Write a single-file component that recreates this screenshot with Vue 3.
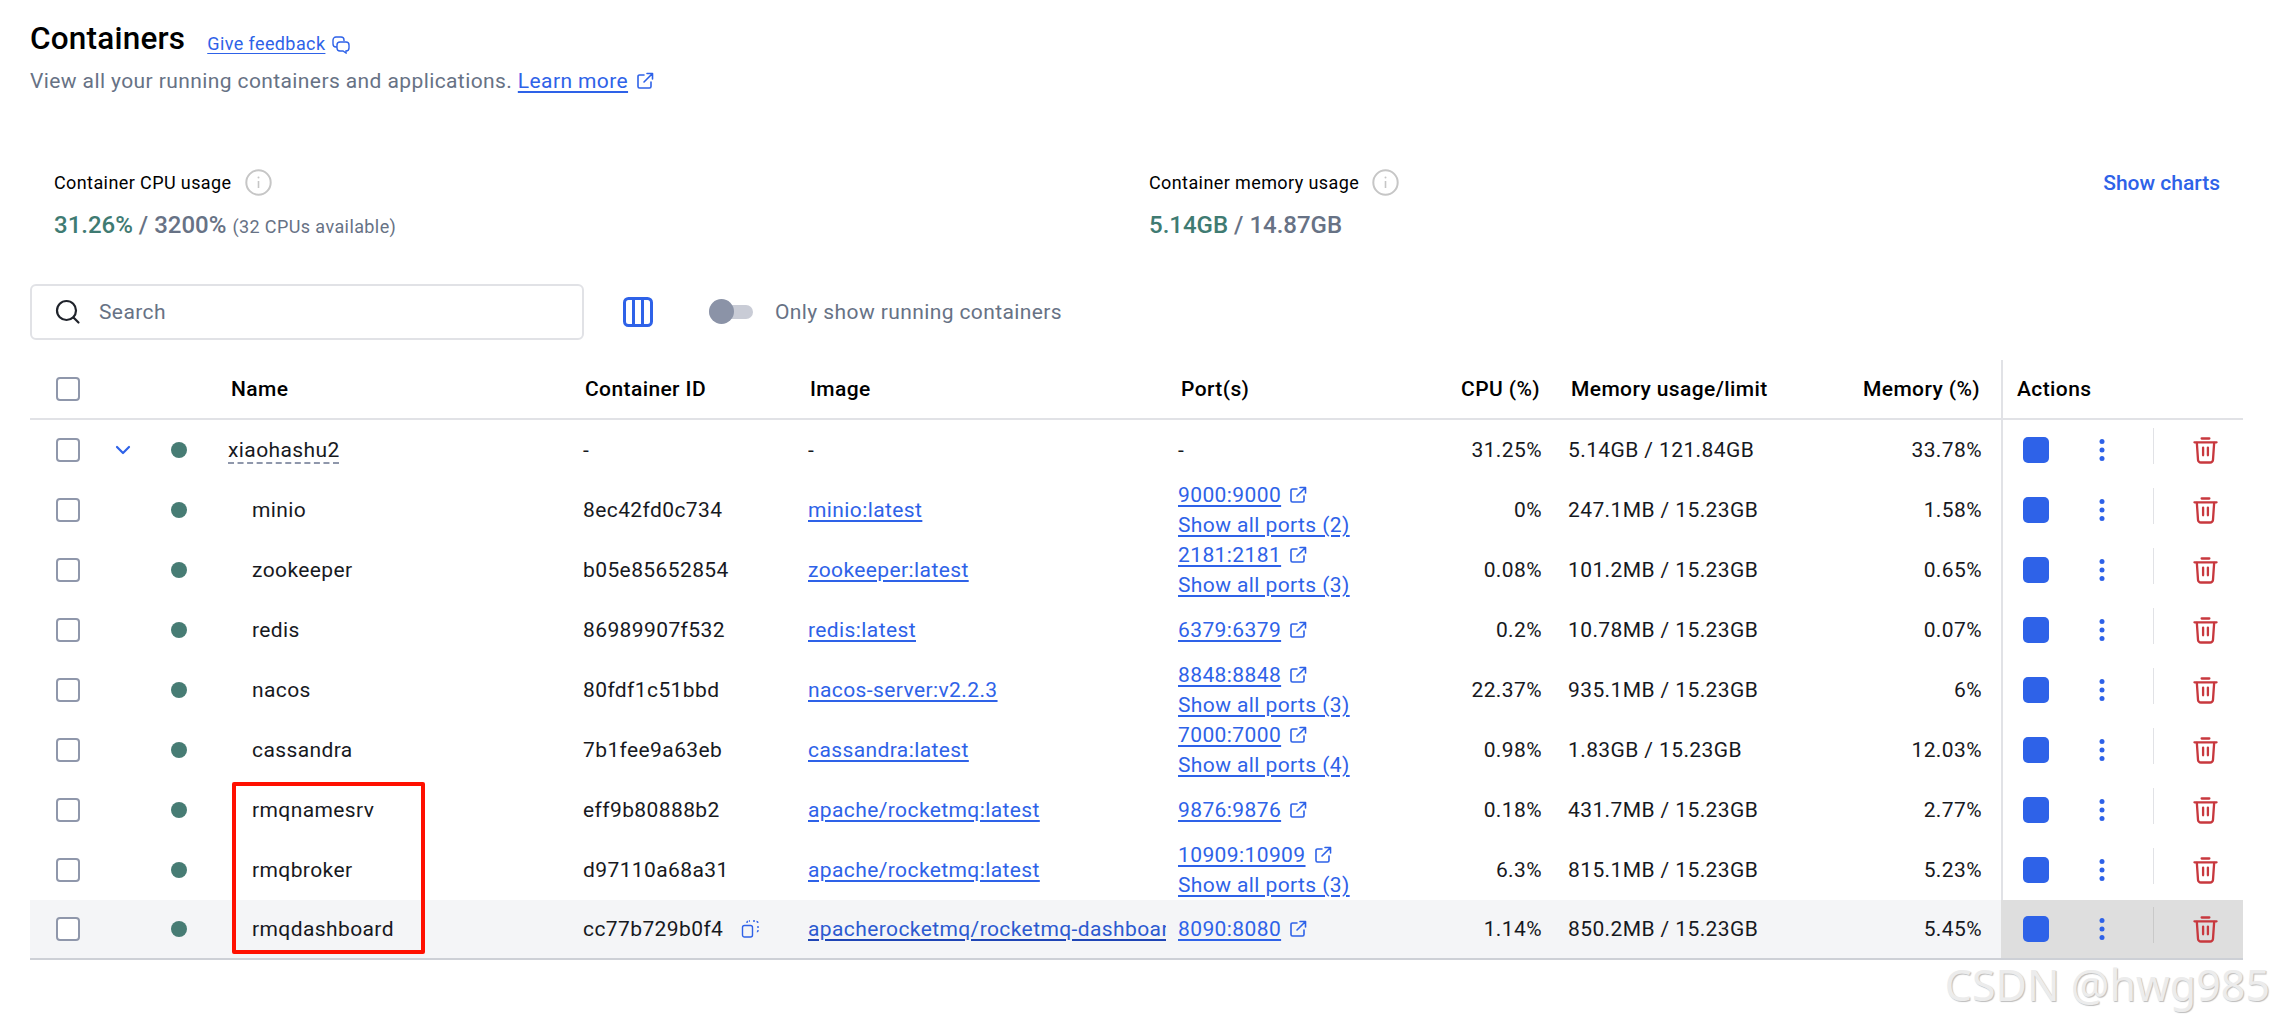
<script setup>
const rows = [
  { name: 'xiaohashu2', group: true, id: '-', image: '-', port: '-', cpu: '31.25%', mem: '5.14GB / 121.84GB', pct: '33.78%' },
  { name: 'minio', id: '8ec42fd0c734', image: 'minio:latest', port: '9000:9000', all: 2, cpu: '0%', mem: '247.1MB / 15.23GB', pct: '1.58%' },
  { name: 'zookeeper', id: 'b05e85652854', image: 'zookeeper:latest', port: '2181:2181', all: 3, cpu: '0.08%', mem: '101.2MB / 15.23GB', pct: '0.65%' },
  { name: 'redis', id: '86989907f532', image: 'redis:latest', port: '6379:6379', cpu: '0.2%', mem: '10.78MB / 15.23GB', pct: '0.07%' },
  { name: 'nacos', id: '80fdf1c51bbd', image: 'nacos-server:v2.2.3', port: '8848:8848', all: 3, cpu: '22.37%', mem: '935.1MB / 15.23GB', pct: '6%' },
  { name: 'cassandra', id: '7b1fee9a63eb', image: 'cassandra:latest', port: '7000:7000', all: 4, cpu: '0.98%', mem: '1.83GB / 15.23GB', pct: '12.03%' },
  { name: 'rmqnamesrv', id: 'eff9b80888b2', image: 'apache/rocketmq:latest', port: '9876:9876', cpu: '0.18%', mem: '431.7MB / 15.23GB', pct: '2.77%' },
  { name: 'rmqbroker', id: 'd97110a68a31', image: 'apache/rocketmq:latest', port: '10909:10909', all: 3, cpu: '6.3%', mem: '815.1MB / 15.23GB', pct: '5.23%' },
  { name: 'rmqdashboard', id: 'cc77b729b0f4', image: 'apacherocketmq/rocketmq-dashboard:latest', port: '8090:8080', cpu: '1.14%', mem: '850.2MB / 15.23GB', pct: '5.45%', hover: true },
]
</script>

<template>
  <div class="page">
    <header class="head">
      <div class="title-line">
        <h1>Containers</h1>
        <a class="feedback">Give feedback</a>
        <svg class="ico-fb" viewBox="0 0 18 18" fill="none" stroke="currentColor" stroke-width="1.4">
          <path d="M5 11H4a3 3 0 0 1-3-3V4a3 3 0 0 1 3-3h5a3 3 0 0 1 3 3v1" />
          <path d="M8 6h6a3 3 0 0 1 3 3v3a3 3 0 0 1-3 3v2l-3-2H8a3 3 0 0 1-3-3V9a3 3 0 0 1 3-3z" />
        </svg>
      </div>
      <p class="sub">View all your running containers and applications. <a>Learn more</a>
        <svg class="ico-ext" viewBox="0 0 18 18" fill="none" stroke="currentColor" stroke-width="1.6" stroke-linecap="round" stroke-linejoin="round">
          <path d="M8 3H3.500A1.500 1.500 0 0 0 2 4.500v10A1.500 1.500 0 0 0 3.500 16h10a1.500 1.500 0 0 0 1.500-1.500V10" />
          <path d="M11 1.500h5.500V7M16.500 1.500L8 10" />
        </svg>
      </p>
    </header>

    <section class="stats">
      <div class="stat cpu">
        <div class="stat-label">Container CPU usage
          <svg class="ico-info" viewBox="0 0 27 27" fill="none"><circle cx="13.500" cy="13.500" r="12.200" stroke="#c6c6c6" stroke-width="2" /><path d="M13.500 12v7" stroke="#c6c6c6" stroke-width="1.600" /><circle cx="13.500" cy="8.600" r="1" fill="#c6c6c6" /></svg>
        </div>
        <div class="stat-value"><span class="good">31.26%</span> / 3200% <small>(32 CPUs available)</small></div>
      </div>
      <div class="stat mem">
        <div class="stat-label">Container memory usage
          <svg class="ico-info" viewBox="0 0 27 27" fill="none"><circle cx="13.500" cy="13.500" r="12.200" stroke="#c6c6c6" stroke-width="2" /><path d="M13.500 12v7" stroke="#c6c6c6" stroke-width="1.600" /><circle cx="13.500" cy="8.600" r="1" fill="#c6c6c6" /></svg>
        </div>
        <div class="stat-value"><span class="good">5.14GB</span> / 14.87GB</div>
      </div>
      <a class="charts">Show charts</a>
    </section>

    <section class="toolbar">
      <label class="search">
        <svg class="ico-search" viewBox="0 0 26 26" fill="none" stroke="#1f232b" stroke-width="2.200" stroke-linecap="round">
          <circle cx="11.500" cy="11.500" r="9.500" />
          <path d="M18.500 18.500l5 5" />
        </svg>
        <span>Search</span>
      </label>
      <svg class="ico-cols" viewBox="0 0 30 30" fill="none" stroke="#2e62e8" stroke-width="3">
        <rect x="1.500" y="1.500" width="27" height="27" rx="4" />
        <path d="M10.500 1.500v27M19.500 1.500v27" />
      </svg>
      <span class="toggle"><i></i></span>
      <span class="toggle-label">Only show running containers</span>
    </section>

    <div class="table">
      <div class="row th">
        <span class="cell-check"><i class="check"></i></span>
        <span></span>
        <span></span>
        <span class="cell-name">Name</span>
        <span>Container ID</span>
        <span>Image</span>
        <span class="cell-port">Port(s)</span>
        <span class="num">CPU (%)</span>
        <span class="cell-mem">Memory usage/limit</span>
        <span class="num">Memory (%)</span>
        <span class="cell-actions"><b>Actions</b></span>
      </div>

      <div v-for="r in rows" :key="r.name" class="row td" :class="{ hover: r.hover }">
        <span class="cell-check"><i class="check"></i></span>
        <span class="cell-chev">
          <svg v-if="r.group" viewBox="0 0 16 10" fill="none" stroke="#2e62e8" stroke-width="2.200" stroke-linecap="round" stroke-linejoin="round"><path d="M2 2l6 6 6-6" /></svg>
        </span>
        <span class="cell-dot"><i></i></span>
        <span class="cell-name" :class="{ child: !r.group }"><span :class="{ dashed: r.group }">{{ r.name }}</span></span>
        <span class="cell-id">{{ r.id }}
          <svg v-if="r.hover" class="ico-copy" viewBox="0 0 18 18" fill="none" stroke="#2e62e8" stroke-width="1.400">
            <rect x="1.500" y="5.500" width="10" height="11.500" rx="2" />
            <path d="M6 3V2.500a1.500 1.500 0 0 1 1.500-1.500H9M12 1h2M15.500 1.500A1.500 1.500 0 0 1 17 3v1M17 6v2M17 10v.5a1.500 1.500 0 0 1-1.500 1.500H15" stroke-dasharray="2 1" />
          </svg>
        </span>
        <span class="cell-image"><a v-if="r.image !== '-'">{{ r.image }}</a><template v-else>-</template></span>
        <span class="cell-port">
          <template v-if="r.port === '-'">-</template>
          <template v-else>
            <span class="port-line"><a>{{ r.port }}</a>
              <svg class="ico-ext" viewBox="0 0 18 18" fill="none" stroke="currentColor" stroke-width="1.600" stroke-linecap="round" stroke-linejoin="round">
                <path d="M8 3H3.500A1.500 1.500 0 0 0 2 4.500v10A1.500 1.500 0 0 0 3.500 16h10a1.500 1.500 0 0 0 1.500-1.500V10" />
                <path d="M11 1.500h5.500V7M16.500 1.500L8 10" />
              </svg>
            </span>
            <span v-if="r.all" class="port-line"><a>Show all ports ({{ r.all }})</a></span>
          </template>
        </span>
        <span class="num">{{ r.cpu }}</span>
        <span class="cell-mem">{{ r.mem }}</span>
        <span class="num">{{ r.pct }}</span>
        <span class="cell-actions">
          <i class="stop"></i>
          <svg class="ico-dots" viewBox="0 0 6 24" fill="#2e62e8"><circle cx="3" cy="3.500" r="2.500" /><circle cx="3" cy="12" r="2.500" /><circle cx="3" cy="20.500" r="2.500" /></svg>
          <i class="sep"></i>
          <svg class="ico-trash" viewBox="0 0 26 28" fill="none" stroke="#c8383e" stroke-width="2.400" stroke-linecap="round" stroke-linejoin="round">
            <path d="M1.500 5.500h23M9 1.500h8" />
            <path d="M4 6l1.200 17.500A3 3 0 0 0 8.200 26.500h9.600a3 3 0 0 0 3-3L22 6" />
            <path d="M10.500 11v8M15.500 11v8" />
          </svg>
        </span>
      </div>
      <div class="highlight" aria-hidden="true"></div>
    </div>

    <div class="watermark">CSDN @hwg985</div>
  </div>
</template>

<style>
html, body { background: #fff; }
</style>

<style scoped>
.page {
  position: relative;
  width: 2275px;
  height: 1025px;
  padding: 0 32px 0 30px;
  box-sizing: border-box;
  overflow: hidden;
  font-family: Roboto, "Liberation Sans", sans-serif;
  font-size: 21px;
  letter-spacing: 0.4px;
  color: #17191e;
  background: #fff;
}
a { color: #2e62e8; text-decoration: underline; text-underline-offset: 3px; }
svg { display: block; flex: none; }
.head { padding-top: 17px; height: 148px; box-sizing: border-box; }
.title-line { display: flex; align-items: center; height: 44px; }
h1 { margin: 0; font-size: 31.500px; font-weight: 500; letter-spacing: 0.2px; color: #000; line-height: 44px; }
.feedback { margin-left: 22px; margin-top: 8px; font-size: 18px; }
.ico-fb { width: 18px; height: 18px; margin-left: 7px; margin-top: 11px; color: #2e62e8; }
.sub { display: flex; align-items: center; margin: -1px 0 0; height: 42px; color: #677285; white-space: pre; }
.sub a { text-decoration-thickness: 2px; }
.sub .ico-ext { margin-left: 8px; color: #2e62e8; }
.ico-ext { width: 18px; height: 18px; color: #2e62e8; }

.stats { display: flex; height: 136px; box-sizing: border-box; padding: 16px 0 0 24px; }
.stat-label { display: flex; align-items: center; gap: 13px; height: 36px; font-size: 18px; color: #000; }
.ico-info { width: 27px; height: 27px; }
.stat-value { margin-top: 7px; font-size: 24px; font-weight: 500; letter-spacing: 0; color: #677285; line-height: 36px; }
.stat-value small { font-size: 18px; font-weight: 400; letter-spacing: 0.4px; }
.good { color: #3f7b72; }
.cpu { width: 1095px; }
.mem { flex: 1; }
.charts { align-self: flex-start; margin: 4px 23px 0 0; line-height: 30px; font-size: 21px; font-weight: 500; letter-spacing: 0; text-decoration: none; }

.toolbar { display: flex; align-items: center; height: 56px; }
.search {
  display: flex; align-items: center; gap: 18px;
  width: 554px; height: 56px; box-sizing: border-box;
  padding-left: 23px;
  border: 2px solid #e1e2e6; border-radius: 6px;
  color: #677285;
}
.ico-search { width: 26px; height: 26px; }
.ico-cols { width: 30px; height: 30px; margin-left: 39px; }
.toggle { position: relative; display: block; width: 44px; height: 14px; margin-left: 56px; background: #c9ccd6; border-radius: 7px; }
.toggle i { position: absolute; left: 0; top: -6px; width: 25px; height: 25px; border-radius: 50%; background: #8b93a7; }
.toggle-label { margin-left: 22px; color: #677285; }

.table { position: relative; width: 2213px; margin-top: 20px; }
.row {
  display: grid;
  grid-template-columns: 70px 46px 66px 371px 225px 358px 234px 142px 258px 182px 261px;
  align-items: center;
  white-space: nowrap;
}
.th { height: 60px; box-sizing: border-box; border-bottom: 2px solid #e1e2e6; font-weight: 500; color: #000; }
.td { height: 60px; }
.th .num { padding-right: 2px; }
.th > span:nth-child(4) { padding-left: 19px; }
.th > span:nth-child(5), .th > span:nth-child(6) { padding-left: 2px; }
.th .cell-port { padding-left: 15px; }
.th .cell-mem { padding-left: 29px; }
.th .cell-actions b { font-weight: 500; }
.cell-check { padding-left: 26px; display: flex; }
.check { display: block; width: 24px; height: 24px; box-sizing: border-box; border: 2.500px solid #8f97ab; border-radius: 4px; background: #fff; }
.cell-chev { display: flex; justify-content: center; }
.cell-chev svg { width: 16px; height: 10px; }
.cell-dot { display: flex; justify-content: center; }
.cell-dot i { width: 16px; height: 16px; border-radius: 50%; background: #477c74; }
.cell-name { padding-left: 16px; }
.cell-name.child { padding-left: 40px; }
.dashed { text-decoration: underline dashed #8f97ab 2px; text-underline-offset: 5px; }
.cell-id { display: flex; align-items: center; gap: 12px; white-space: pre; }
.ico-copy { width: 18px; height: 18px; }
.cell-image { overflow: hidden; }
.hover .cell-image a { color: #2c5ad0; text-decoration-color: #1f45b5; }
.cell-port { padding-left: 12px; display: flex; flex-direction: column; line-height: 30px; }
.port-line { display: flex; align-items: center; gap: 8px; }
.num { text-align: right; }
.cell-mem { padding-left: 26px; }
.cell-actions {
  display: flex; align-items: center;
  height: 100%;
  margin-left: 19px;
  padding-left: 22px;
  border-left: 2px solid #e1e2e6;
  box-sizing: border-box;
}
.th .cell-actions { padding-left: 14px; height: 100%; }
.td .cell-actions { padding-left: 20px; }
.stop { display: block; width: 26px; height: 26px; border-radius: 5px; background: #2e62e8; }
.ico-dots { width: 6px; height: 24px; margin-left: 50px; }
.sep { display: block; width: 1px; height: 36px; margin-left: 48px; margin-top: -8px; background: #e1e2e6; }
.ico-trash { width: 25px; height: 27px; margin-left: 39px; }
.hover { background: #f4f5f7; border-bottom: 2px solid #cdd0d6; box-sizing: border-box; }
.hover .cell-actions { background: #dedede; border-left-color: #dedede; }
.hover .sep { background: #c9c9c9; }
.highlight {
  position: absolute; left: 202px; top: 422px;
  width: 193px; height: 172px; box-sizing: border-box;
  border: 4px solid #ff1000; border-radius: 2px;
  pointer-events: none;
}
.watermark {
  position: absolute; right: 5px; top: 955px;
  font-family: "Noto Sans", sans-serif;
  font-size: 43px; letter-spacing: 0; color: #ececec;
  text-shadow: 1px 1px 1px #bcbcbc;
  white-space: nowrap;
}
</style>
